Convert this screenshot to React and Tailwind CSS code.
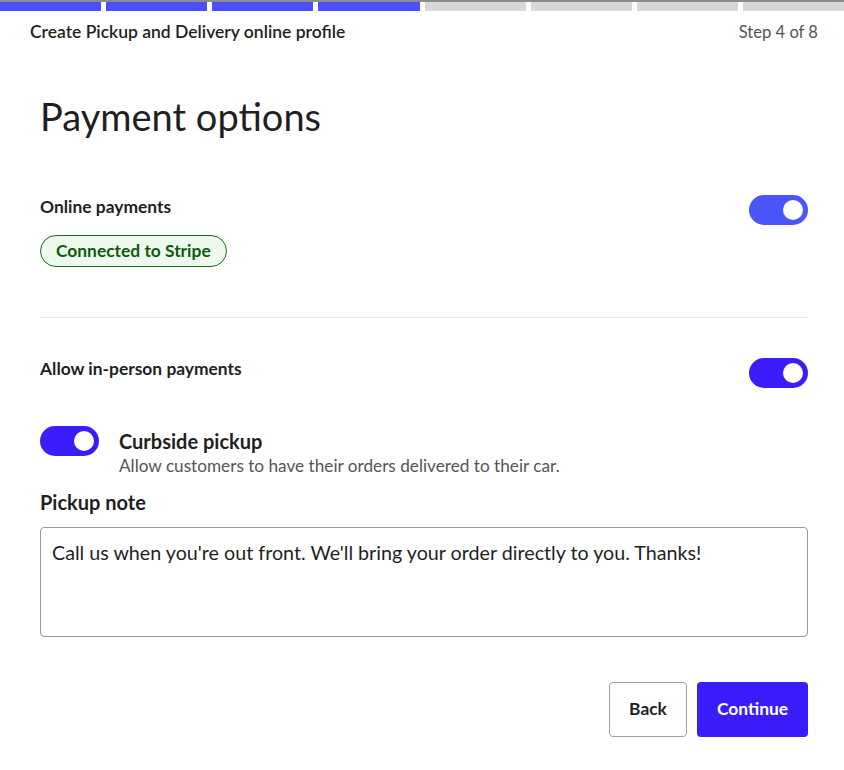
export default function App() {
  const segs = [true, true, true, true, false, false, false, false];
  return (
    <div className="w-[844px] h-[770px] bg-white relative overflow-hidden" style={{ fontFamily: "Lato, 'Noto Sans', sans-serif" }}>
      <div className="h-[2px] bg-[#8c8c8c]" />
      <div className="flex gap-[5px] h-[9px]">
        {segs.map((on, i) => (
          <div key={i} className={"flex-1 " + (on ? "bg-[#4a4ff8]" : "bg-[#d8d8dc]")} />
        ))}
      </div>
      <div className="flex justify-between items-center pl-[30px] pr-[26px] pt-[10px] leading-[22px]">
        <span className="font-semibold text-[17.5px] text-[#1f1f1f]">Create Pickup and Delivery online profile</span>
        <span className="text-[16.6px] text-[#555]">Step 4 of 8</span>
      </div>
      <div className="pl-[40px] pr-[36px]">
        <h1 className="text-[38px] leading-[46px] text-[#1f1f1f] mt-[50px] font-normal">Payment options</h1>
        <div className="mt-[57px] flex justify-between items-start">
          <div>
            <div className="text-[17.4px] leading-[22px] font-bold text-[#1f1f1f]">Online payments</div>
            <div className="mt-[17px] inline-flex items-center h-[32px] px-[15px] rounded-full border border-[#1a6b1a] bg-[#eef9ee] text-[#0b5c0b] font-bold text-[17.4px]">Connected to Stripe</div>
          </div>
          <Toggle color="bg-[#4a55fb]" className="mt-[-1px]" />
        </div>
        <div className="h-px bg-[#e6e6e6] mt-[50px]" />
        <div className="mt-[40px] flex justify-between items-start">
          <div className="text-[17.4px] leading-[22px] font-bold text-[#1f1f1f]">Allow in-person payments</div>
          <Toggle color="bg-[#3b1cfb]" />
        </div>
        <div className="mt-[38px] flex gap-[20px] items-start">
          <Toggle color="bg-[#3b1cfb]" />
          <div className="pt-[3px]">
            <div className="text-[20px] leading-[24px] font-bold text-[#1f1f1f]">Curbside pickup</div>
            <div className="mt-[2px] text-[17.2px] leading-[22px] text-[#555]">Allow customers to have their orders delivered to their car.</div>
          </div>
        </div>
        <div className="mt-[13px] text-[20px] leading-[24px] font-bold text-[#1f1f1f]">Pickup note</div>
        <div className="mt-[13px] h-[110px] border border-[#9a9a9a] rounded-[4px] px-[11px] pt-[13px] text-[19.7px] leading-[24px] text-[#1f1f1f]">
          Call us when you're out front. We'll bring your order directly to you. Thanks!
        </div>
        <div className="mt-[45px] flex justify-end gap-[10px]">
          <button className="h-[55px] w-[78px] border border-[#a0a0a0] rounded-[4px] bg-white text-[17.4px] font-bold text-[#1f1f1f]">Back</button>
          <button className="h-[55px] w-[111px] rounded-[4px] bg-[#3a1cfb] text-[17.4px] font-bold text-white">Continue</button>
        </div>
      </div>
    </div>
  );
}

function Toggle({ color, className = "" }) {
  return (
    <div className={"shrink-0 w-[59px] h-[30px] rounded-full flex items-center justify-end pr-[5px] " + color + " " + className}>
      <div className="w-[20px] h-[20px] rounded-full bg-white" />
    </div>
  );
}
